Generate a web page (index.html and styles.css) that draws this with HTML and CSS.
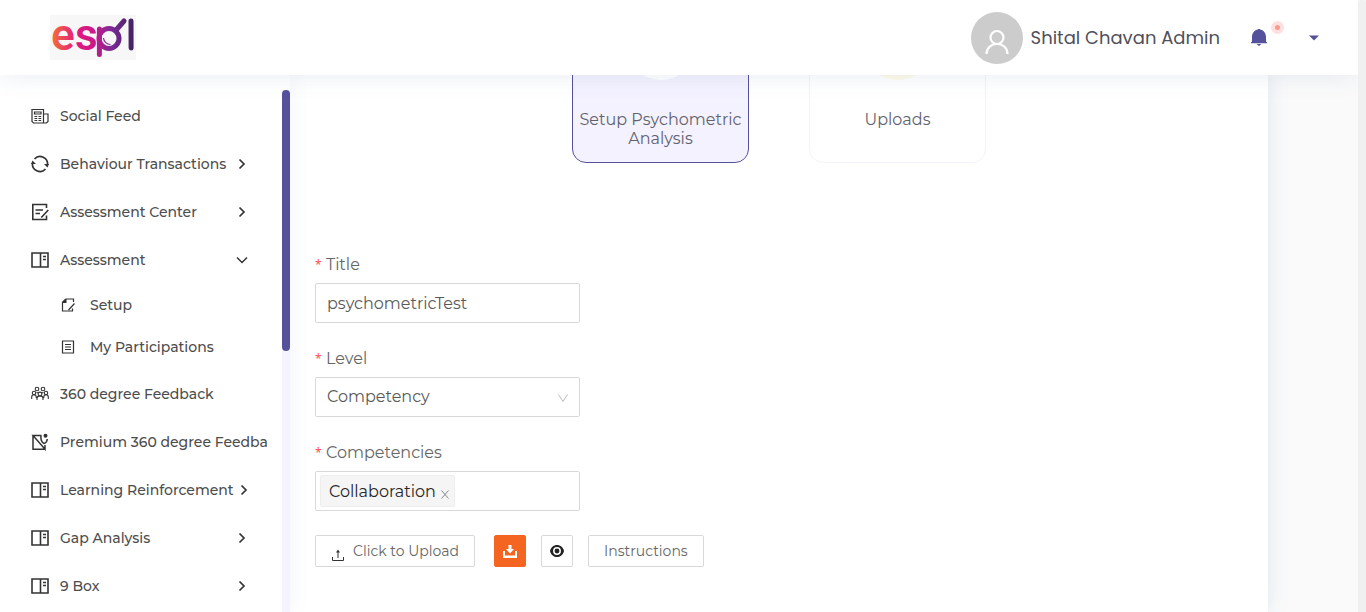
FILE: index.html
```html
<!DOCTYPE html>
<html lang="en">
<head>
<meta charset="utf-8">
<meta name="viewport" content="width=device-width, initial-scale=1">
<title>Setup Psychometric Analysis</title>
<link rel="stylesheet" href="styles.css">
</head>
<body>
<svg class="sprite" aria-hidden="true">
  <symbol id="book" viewBox="0 0 18 18"><path d="M1 2h16v14H1zM9.500 2v14M12 5.500h3M12 8.500h3" fill="none" stroke="currentColor" stroke-width="1.600"/></symbol>
  <symbol id="right" viewBox="0 0 12 12"><path d="M3.500 1.500 8 6 3.500 10.500" fill="none" stroke="currentColor" stroke-width="1.700"/></symbol>
  <symbol id="down" viewBox="0 0 12 12"><path d="M1 3.500 6 8.500 11 3.500" fill="none" stroke="currentColor" stroke-width="1.500"/></symbol>
</svg>
<div class="app">
  <div class="page">
    <header class="header">
      <a class="logo" href="#" aria-label="espl home">
        <svg width="86" height="45" viewBox="0 0 86 45">
          <defs>
            <linearGradient id="brand" gradientUnits="userSpaceOnUse" x1="3" y1="0" x2="84" y2="0">
              <stop offset="0" stop-color="#f4693f"/><stop offset=".3" stop-color="#e01883"/><stop offset=".48" stop-color="#d01886"/><stop offset=".72" stop-color="#7b2b96"/><stop offset="1" stop-color="#41235f"/>
            </linearGradient>
          </defs>
          <text class="logo-text" x="1 25" y="35" fill="url(#brand)">es</text>
          <g fill="none" stroke="url(#brand)" stroke-width="5" stroke-linecap="round">
            <circle cx="59" cy="23.500" r="10"/>
            <path d="M49.400 14v25.500M67 14l7-8M81 6l.1 27"/>
          </g>
          <path d="M53.500 23a7 7 0 0 0 7 6.500" fill="none" stroke="#8a2b96" stroke-width="1.200"/>
        </svg>
      </a>
      <div class="user">
        <span class="avatar"><svg width="24" height="26" viewBox="0 0 24 26" fill="none" stroke="#fff" stroke-width="2.200"><circle cx="12" cy="8.500" r="6.500"/><path d="M1.500 25c0-6 4.500-10 10.500-10s10.500 4 10.500 10"/></svg></span>
        <span class="user-name">Shital Chavan Admin</span>
        <button class="bell" type="button" aria-label="Notifications">
          <svg width="16" height="18" viewBox="0 0 16 18" fill="#56519b"><path d="M1 13V8C1 4 3.500 1 7 .5V0h2v.5c3.500.5 6 3.500 6 7.500v5h.9v1.300H.1V13zM5.500 15h5L8 17z"/></svg>
          <span class="dot"></span>
        </button>
        <button class="caret" type="button" aria-label="Account menu"><svg width="10" height="6" viewBox="0 0 10 6"><path d="M0 .5h10L5 5.500z" fill="#56519b"/></svg></button>
      </div>
    </header>
    <div class="body">
      <aside class="sidebar">
        <nav class="nav" aria-label="Main">
          <a class="item" href="#"><svg class="icon" viewBox="0 0 18 18" fill="none" stroke="currentColor" stroke-width="1.200"><path d="M1 2.500h11.500V16H2.500L1 14.500zM12.500 7H17v7.500L15.500 16h-3M3.500 5H10v2H3.500z"/><path d="M3.500 9.500h2.700M7.500 9.500h2.700M3.500 11.500h2.700M7.500 11.500h2.700M3.500 13.500h2.700M7.500 13.500h2.700"/></svg><span class="text">Social Feed</span></a>
          <a class="item" href="#"><svg class="icon" viewBox="0 0 18 18" fill="none" stroke="currentColor" stroke-width="1.700"><path d="M3.500 4A7.500 7.500 0 0 1 16.500 10M14.500 14A7.500 7.500 0 0 1 1.500 8"/><path d="M13 9h5l-1.500 3.500zM0 9h5L1.500 5.500z" fill="currentColor" stroke="none"/></svg><span class="text">Behaviour Transactions</span><svg class="arrow"><use href="#right"/></svg></a>
          <a class="item" href="#"><svg class="icon" viewBox="0 0 18 18" fill="none" stroke="currentColor" stroke-width="1.600"><path d="M15.500 5V1.500H1.800v15h13.700v-4M4.500 7H12M4.500 10.500H9M17.300 7l-7 7.500"/></svg><span class="text">Assessment Center</span><svg class="arrow"><use href="#right"/></svg></a>
          <a class="item" href="#" aria-expanded="true"><svg class="icon"><use href="#book"/></svg><span class="text">Assessment</span><svg class="arrow"><use href="#down"/></svg></a>
          <div class="submenu">
            <a class="item sub" href="#"><svg class="icon" viewBox="0 0 14 14" fill="none" stroke="currentColor" stroke-width="1.200"><path d="M12.500 4V1H5L1.500 4.500V13h10v-2.500M13.500 5.500l-6 6.500"/><path d="M1 5V4l3-3h1.500v4z" fill="currentColor" stroke="none"/></svg><span class="text">Setup</span></a>
            <a class="item sub" href="#"><svg class="icon" viewBox="0 0 14 14" fill="none" stroke="currentColor" stroke-width="1.200"><path d="M1.500 1h11v12h-11zM4 4.500h6M4 7h6M4 9.500h6"/></svg><span class="text">My Participations</span></a>
          </div>
          <a class="item" href="#"><svg class="icon" viewBox="0 0 18 18" fill="none" stroke="currentColor" stroke-width="1.100"><circle cx="6" cy="4" r="1.800"/><circle cx="12" cy="4" r="1.800"/><circle cx="3" cy="8" r="1.700"/><circle cx="15" cy="8" r="1.700"/><circle cx="9" cy="9" r="1.900"/><path d="M.7 14v-2c0-3 4.300-3 4.600 0v1M17.300 14v-2c0-3-4.300-3-4.600 0v1M6 15v-1.500c0-3.500 6-3.500 6 0V15M5.500 7.500l2 .5M12.500 7.500l-2 .5"/></svg><span class="text">360 degree Feedback</span></a>
          <a class="item" href="#"><svg class="icon" viewBox="0 0 18 18" fill="none" stroke="currentColor" stroke-width="1.500"><path d="M10.500 2.500H2l12 13.700V12M2 2.500v13.700h12M10 2.500c-.5 5 1 7 3 8 2-.5 3-2 3.300-4.500"/><circle cx="14.500" cy="2.800" r="2" fill="currentColor" stroke="none"/></svg><span class="text">Premium 360 degree Feedback</span></a>
          <a class="item" href="#"><svg class="icon"><use href="#book"/></svg><span class="text">Learning Reinforcement</span><svg class="arrow"><use href="#right"/></svg></a>
          <a class="item" href="#"><svg class="icon"><use href="#book"/></svg><span class="text">Gap Analysis</span><svg class="arrow"><use href="#right"/></svg></a>
          <a class="item" href="#"><svg class="icon"><use href="#book"/></svg><span class="text">9 Box</span><svg class="arrow"><use href="#right"/></svg></a>
        </nav>
        <div class="track" aria-hidden="true"><div class="thumb"></div></div>
      </aside>
      <main class="main">
        <div class="steps">
          <a class="step active" href="#"><span class="circle"></span>Setup Psychometric Analysis</a>
          <a class="step" href="#"><span class="circle"></span>Uploads</a>
        </div>
        <form class="form">
          <div class="field">
            <label for="title"><span class="star">*</span>Title</label>
            <input class="control" id="title" type="text" value="psychometricTest">
          </div>
          <div class="field">
            <label for="level"><span class="star">*</span>Level</label>
            <div class="select-wrap">
              <select class="control" id="level"><option>Competency</option></select>
              <svg class="chevron" width="12" height="12" viewBox="0 0 12 12"><path d="M1.500 2.500 6 9.500 10.500 2.500" fill="none" stroke="currentColor"/></svg>
            </div>
          </div>
          <div class="field">
            <label for="competencies"><span class="star">*</span>Competencies</label>
            <div class="control tags">
              <span class="tag">Collaboration<button type="button" class="remove" aria-label="Remove Collaboration"><svg width="8" height="9" viewBox="0 0 8 9"><path d="M.5.5l7 8M7.500.5l-7 8" stroke="#888"/></svg></button></span>
              <input class="search" id="competencies" type="text">
            </div>
          </div>
          <div class="actions">
            <button class="btn upload" type="button"><svg width="12" height="12" viewBox="0 0 12 12" fill="none" stroke="#333"><path d="M.5 8v3.500h11V8M6 9V2"/><path d="M4 3.500 6 .5l2 3z" fill="#333" stroke="none"/></svg>Click to Upload</button>
            <button class="btn square primary" type="button" aria-label="Download"><svg width="14" height="13" viewBox="0 0 14 13"><path d="M5.500 0h3v4H11L7 8.500 3 4h2.500zM0 6h2v4.500h10V6h2v7H0z" fill="#fff"/></svg></button>
            <button class="btn square" type="button" aria-label="Preview"><svg width="14" height="12" viewBox="0 0 14 12"><path d="M0 6C2-2 12-2 14 6 12 14 2 14 0 6z" fill="#222"/><circle cx="7" cy="6" r="3.200" fill="none" stroke="#fff" stroke-width="1.500"/></svg></button>
            <button class="btn" type="button">Instructions</button>
          </div>
        </form>
      </main>
    </div>
  </div>
  <div class="page-scroll" aria-hidden="true"></div>
</div>
</body>
</html>
```
FILE: styles.css
```css
* { box-sizing: border-box; }
body {
  margin: 0;
  font-family: Montserrat, Inter, "Open Sans", sans-serif;
  color: #333;
  background: #fafafa;
}
a { color: inherit; text-decoration: none; }
button { font-family: inherit; cursor: pointer; }
svg { display: block; flex: none; }
.sprite { display: none; }

.app { display: flex; height: 100vh; overflow: hidden; }
.page { flex: 1; min-width: 0; display: flex; flex-direction: column; }
.page-scroll { width: 8px; background: #f0f0f0; border-radius: 4px 4px 0 0; z-index: 3; }

.header {
  flex: none;
  position: relative;
  z-index: 2;
  height: 75px;
  padding: 0 39px 0 50px;
  display: flex;
  align-items: center;
  justify-content: space-between;
  background: #fff;
  box-shadow: 0 0 24px rgba(60, 100, 150, .12);
}
.logo { background: #f7f7f7; }
.logo-text { font: 600 44px Roboto, sans-serif; }
.user { display: flex; align-items: center; }
.avatar {
  width: 52px;
  height: 52px;
  padding-top: 8px;
  display: flex;
  align-items: center;
  justify-content: center;
  border-radius: 50%;
  background: #ccc;
}
.user-name { margin-left: 8px; font-family: Poppins, Montserrat, sans-serif; font-size: 18px; color: #50505a; }
.bell {
  position: relative;
  margin-left: 31px;
  padding: 0;
  border: 0;
  background: none;
}
.dot {
  position: absolute;
  top: -8px;
  left: 20px;
  width: 13px;
  height: 13px;
  border: 4px solid #fde0df;
  border-radius: 50%;
  background: #fb9a8c;
}
.caret { margin-left: 42px; padding: 0; border: 0; background: none; }

.body { flex: 1; min-height: 0; display: flex; }
.sidebar {
  flex: none;
  position: relative;
  z-index: 1;
  width: 290px;
  padding-top: 15px;
  display: flex;
  background: #fff;
  box-shadow: 0 0 20px rgba(60, 120, 180, .08);
}
.nav { flex: 1; min-width: 0; margin-right: 15px; padding: 2px 0 0 31px; overflow: hidden; }
.item { display: flex; align-items: center; height: 48px; font-size: 14px; font-weight: 500; white-space: nowrap; }
.item .text { flex: none; margin: 0 4px 0 11px; color: #4d4d4d; }
.icon { width: 18px; height: 18px; }
.arrow { width: 12px; height: 12px; margin-left: auto; margin-right: 19px; }
.submenu { padding: 0 0 2px 30px; }
.sub { height: 42px; }
.sub .icon { width: 14px; height: 14px; }
.sub .text { margin-left: 15px; }
.track { width: 8px; background: #f4f3ff; }
.thumb { height: 50%; border-radius: 4px; background: #56519b; }

.main {
  flex: 1;
  min-width: 0;
  margin-right: 90px;
  background: #fff;
  box-shadow: 0 0 20px rgba(60, 120, 180, .15);
  overflow: hidden;
}
.steps { display: flex; justify-content: center; gap: 60px; margin-top: -86px; }
.step {
  width: 177px;
  padding: 20px 5px 14px;
  border: 1px solid #f4f2fd;
  border-radius: 14px;
  font-size: 16px;
  line-height: 19px;
  text-align: center;
  color: #62626e;
}
.circle { display: block; width: 70px; height: 70px; margin: 0 auto 30px; border-radius: 50%; background: #fffbe9; }
.active { border-color: #56519b; background: #f4f2ff; }
.active .circle { background: #fff; }

.form { padding: 90px 25px 0; font-size: 16px; color: #666; }
.field { width: 265px; margin-bottom: 24px; }
.field label { display: flex; line-height: 24px; margin-bottom: 6px; }
.star { width: 7px; margin-right: 4px; font: 12px/24px "Noto Sans", sans-serif; color: #ff4d4f; }
.control {
  width: 100%;
  height: 40px;
  padding: 0 11px;
  border: 1px solid #d9d9d9;
  border-radius: 2px;
  background: #fff;
  font: 16px Montserrat, Inter, sans-serif;
  color: #595959;
}
input.control { display: block; }
.select-wrap { position: relative; }
select.control { display: block; appearance: none; padding-bottom: 2px; }
.chevron { position: absolute; right: 11px; top: 15px; color: #bbb; pointer-events: none; }
.tags { display: flex; align-items: center; padding: 0 4px; }
.tag {
  display: flex;
  align-items: center;
  height: 32px;
  padding: 0 5px 0 8px;
  border: 1px solid #eee;
  border-radius: 2px;
  background: #f5f5f5;
  color: #262626;
}
.remove { margin-left: 5px; padding: 6px 0 0; border: 0; background: none; }
.search { flex: 1; min-width: 0; border: 0; outline: 0; }
.actions { display: flex; gap: 15px; }
.btn {
  display: flex;
  align-items: center;
  justify-content: center;
  height: 32px;
  padding: 0 15px;
  border: 1px solid #d9d9d9;
  border-radius: 2px;
  background: #fff;
  font-size: 14px;
  color: #666;
}
.upload { gap: 9px; margin-right: 4px; padding-left: 16px; }
.upload svg { margin-top: 7px; }
.square { width: 32px; padding: 0; }
.primary { border-color: #f56522; background: #f56522; }
```
